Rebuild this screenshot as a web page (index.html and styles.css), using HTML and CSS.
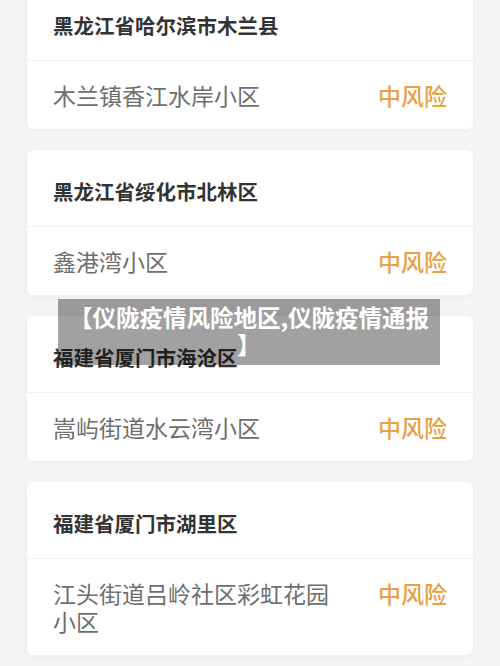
FILE: index.html
```html
<html>
<head>
<meta charset="utf-8">
<link rel="stylesheet" href="styles.css">
</head>
<body>
  <div class="list">
    <div class="card">
      <div class="card-title">黑龙江省哈尔滨市木兰县</div>
      <div class="card-row">
        <span class="place">木兰镇香江水岸小区</span>
        <span class="risk">中风险</span>
      </div>
    </div>
    <div class="card">
      <div class="card-title">黑龙江省绥化市北林区</div>
      <div class="card-row">
        <span class="place">鑫港湾小区</span>
        <span class="risk">中风险</span>
      </div>
    </div>
    <div class="card">
      <div class="card-title">福建省厦门市海沧区</div>
      <div class="card-row">
        <span class="place">嵩屿街道水云湾小区</span>
        <span class="risk">中风险</span>
      </div>
    </div>
    <div class="card">
      <div class="card-title">福建省厦门市湖里区</div>
      <div class="card-row">
        <span class="place">江头街道吕岭社区彩虹花园小区</span>
        <span class="risk">中风险</span>
      </div>
    </div>
  </div>

  <div class="caption">【仪陇疫情风险地区,仪陇疫情通报】</div>
</body>
</html>
```

FILE: styles.css
```css
body{
  margin: 0px;
  background-color: #f4f4f4;
  font-family: "Noto Sans CJK SC", "Noto Sans", sans-serif;
  overflow: hidden;
}
.list{
  display: flex;
  flex-direction: column;
  gap: 21px;
  margin-top: -16px;
  padding: 0 27px;
}
.card{
  background-color: #fff;
  border-radius: 6px;
  box-shadow: 0 1px 6px rgba(0, 0, 0, 0.04);
}
.card-title{
  padding: 27px 26px 21px 26px;
  line-height: 28px;
  font-size: 20.5px;
  font-weight: bold;
  color: #333;
  border-bottom: 1px solid #f2f2f2;
}
.card-row{
  display: flex;
  align-items: flex-start;
  justify-content: space-between;
  gap: 40px;
  padding: 20px 26px 20px 26px;
  line-height: 28px;
  font-size: 23px;
}
.place{
  flex: 1;
  color: #6e6e6e;
}
.risk{
  color: #eb9f45;
  font-weight: 500;
  white-space: nowrap;
}
.caption{
  position: absolute;
  top: 299px;
  left: 58px;
  width: 362px;
  padding: 5px 10px 7px 10px;
  background-color: rgba(0, 0, 0, 0.37);
  color: #fff;
  font-size: 23.5px;
  font-weight: bold;
  line-height: 27px;
  text-align: center;
  line-break: anywhere;
}
```
